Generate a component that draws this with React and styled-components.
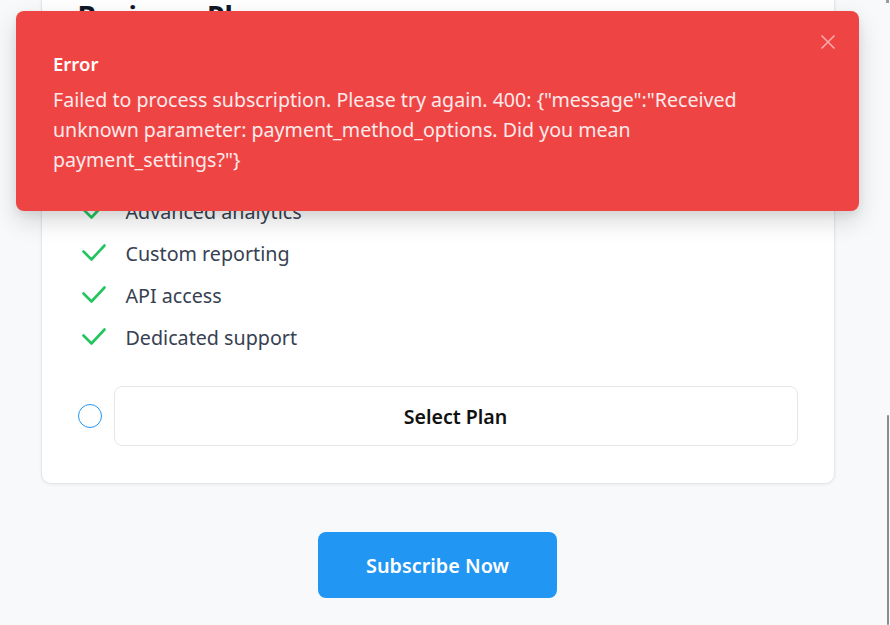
import React from 'react';
import styled, { createGlobalStyle } from 'styled-components';

const GlobalStyle = createGlobalStyle`
  html, body {
    margin: 0;
    padding: 0;
    height: 100%;
    overflow: hidden;
    background: #f8f9fb;
    font-family: "Noto Sans", "Open Sans", sans-serif;
  }
  #root {
    height: 100%;
  }
`;

const Shell = styled.div`
  display: flex;
  height: 100%;
`;

const Main = styled.div`
  position: relative;
  flex: 1;
  display: flex;
  flex-direction: column;
  align-items: center;
`;

const Rail = styled.div`
  width: 15px;
  display: flex;
  flex-direction: column;
  align-items: flex-end;
`;

const RailArrow = styled.div`
  width: 3px;
  height: 3px;
  margin-right: 1px;
  background: #9a9a9a;
`;

const RailThumb = styled.div`
  flex: 1;
  width: 2px;
  margin: 412px 1px 0 0;
  background: #8c8c8c;
  border-radius: 1px;
`;

const Card = styled.div`
  box-sizing: border-box;
  width: 794px;
  margin-top: -40px;
  padding: 37px 36px;
  background: #ffffff;
  border: 1px solid #e5e7eb;
  border-radius: 10px;
  box-shadow: 0 1px 3px rgba(0, 0, 0, 0.06);
`;

const PlanTitle = styled.h2`
  margin: 0 0 6px;
  font-size: 28px;
  line-height: 36px;
  font-weight: 700;
  color: #111827;
`;

const Price = styled.div`
  margin-bottom: 7px;
  font-size: 16px;
  line-height: 24px;
  color: #6b7280;
`;

const FeatureList = styled.ul`
  list-style: none;
  margin: 0 0 35px;
  padding: 0;
  display: flex;
  flex-direction: column;
  gap: 14px;
`;

const Feature = styled.li`
  display: flex;
  align-items: center;
  gap: 20px;
  height: 28px;
  padding-left: 4px;
  font-size: 19.7px;
  color: #374151;
`;

const SelectRow = styled.div`
  display: flex;
  align-items: center;
  gap: 12px;
`;

const Radio = styled.span`
  box-sizing: border-box;
  width: 24px;
  height: 24px;
  border: 1.6px solid #2196f3;
  border-radius: 50%;
  flex-shrink: 0;
`;

const SelectButton = styled.button`
  flex: 1;
  height: 60px;
  background: #ffffff;
  border: 1px solid #e5e7eb;
  border-radius: 8px;
  font-family: inherit;
  font-size: 19.6px;
  font-weight: 600;
  color: #111111;
  cursor: pointer;
`;

const SubscribeButton = styled.button`
  margin-top: 48px;
  width: 239px;
  height: 66px;
  background: #2196f3;
  border: none;
  border-radius: 8px;
  font-family: inherit;
  font-size: 19.8px;
  font-weight: 600;
  color: #ffffff;
  cursor: pointer;
`;

const Toast = styled.div`
  position: absolute;
  top: 11px;
  left: 16px;
  right: 16px;
  box-sizing: border-box;
  height: 200px;
  padding: 39px 37px 0;
  background: #ef4444;
  border-radius: 8px;
  box-shadow: 0 10px 25px rgba(0, 0, 0, 0.15), 0 4px 8px rgba(0, 0, 0, 0.06);
  color: #ffffff;
`;

const ToastTitle = styled.div`
  font-size: 18.5px;
  line-height: 28px;
  font-weight: 600;
`;

const ToastMessage = styled.div`
  margin-top: 7px;
  max-width: 720px;
  font-size: 19.6px;
  line-height: 30px;
  color: #fdeaea;
`;

const CloseButton = styled.button`
  position: absolute;
  top: 23px;
  right: 23px;
  width: 16px;
  height: 16px;
  padding: 0;
  border: none;
  background: none;
  cursor: pointer;
  display: flex;
`;

const CheckIcon = () => (
  <svg width="24" height="18" viewBox="0 0 24 18" fill="none">
    <polyline points="1.5,7.5 9.5,15.5 22.5,1.5" stroke="#22c55e" strokeWidth="2.6" strokeLinecap="round" strokeLinejoin="round" />
  </svg>
);

const features = [
  'Everything in Pro',
  'Unlimited projects',
  'Team collaboration',
  'Advanced analytics',
  'Custom reporting',
  'API access',
  'Dedicated support',
];

export default function App() {
  return (
    <>
      <GlobalStyle />
      <Shell>
        <Main>
          <Card>
            <PlanTitle>Business Plan</PlanTitle>
            <Price>$99 / month</Price>
            <FeatureList>
              {features.map((f) => (
                <Feature key={f}>
                  <CheckIcon />
                  {f}
                </Feature>
              ))}
            </FeatureList>
            <SelectRow>
              <Radio />
              <SelectButton>Select Plan</SelectButton>
            </SelectRow>
          </Card>
          <SubscribeButton>Subscribe Now</SubscribeButton>

          <Toast>
            <ToastTitle>Error</ToastTitle>
            <ToastMessage>
              Failed to process subscription. Please try again. 400: {'{"message":"Received unknown parameter: payment_method_options. Did you mean payment_settings?"}'}
            </ToastMessage>
            <CloseButton aria-label="Close">
              <svg width="16" height="16" viewBox="0 0 16 16">
                <path d="M1.5 1.5 14.5 14.5M14.5 1.5 1.5 14.5" stroke="rgba(255,255,255,0.55)" strokeWidth="1.6" />
              </svg>
            </CloseButton>
          </Toast>
        </Main>
        <Rail>
          <RailArrow />
          <RailThumb />
        </Rail>
      </Shell>
    </>
  );
}
